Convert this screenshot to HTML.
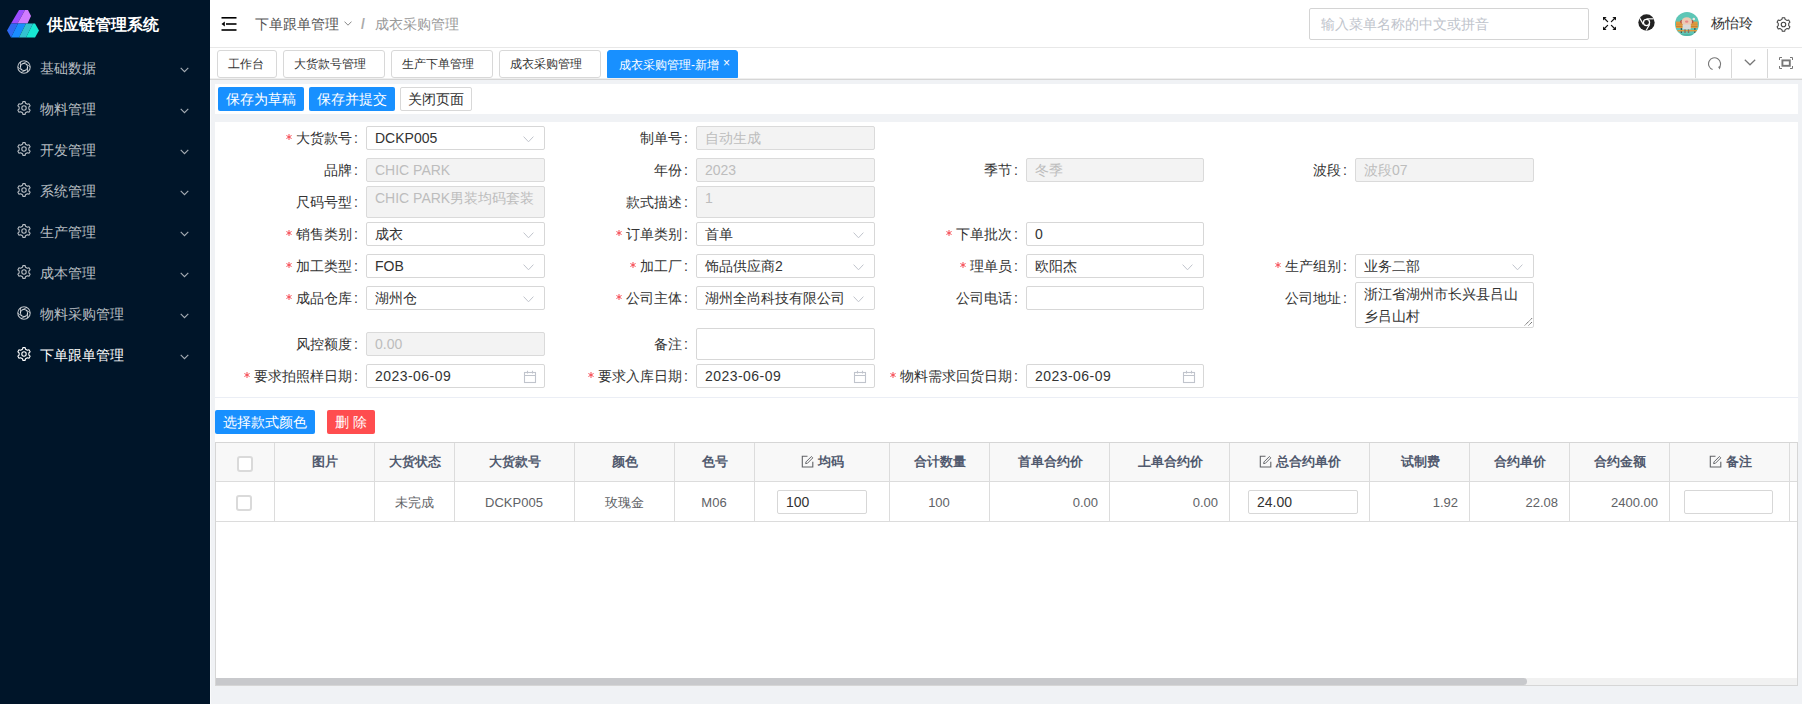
<!DOCTYPE html>
<html><head><meta charset="utf-8">
<style>
*{box-sizing:border-box;margin:0;padding:0}
html,body{width:1802px;height:704px;overflow:hidden}
body{position:relative;background:#f0f2f5;font-family:"Liberation Sans",sans-serif;font-size:14px;color:#606266}
.a{position:absolute}
svg{display:block}
#side{left:0;top:0;width:210px;height:704px;background:#001529}
.logo-t{left:47px;top:14.5px;font-size:16px;font-weight:bold;color:#fff;line-height:20px;white-space:nowrap}
.mi{left:0;width:210px;height:0;color:rgba(255,255,255,.72)}
.mi.on{color:#fff}
.mi .ic{position:absolute;left:17px;top:-8px}
.mi .tx{position:absolute;left:40px;top:-10px;font-size:14px;line-height:20px;white-space:nowrap}
.mi .cv{position:absolute;left:180px;top:-1px;color:rgba(255,255,255,.65)}
#hdr{left:210px;top:0;width:1592px;height:48px;background:#fff;border-bottom:1px solid #e8e8e8}
#tabbar{left:210px;top:48px;width:1592px;height:32px;background:#fff;border-bottom:1px solid #d6d6d6}
.tab{top:50px;height:28px;border:1px solid #d8d8d8;border-radius:3px;font-size:12px;color:#333;line-height:26px;padding-left:10px;white-space:nowrap;background:#fff}
.tab.on{background:#1890ff;border-color:#1890ff;color:#fff;border-radius:3px 3px 0 0;line-height:28px}
.card{background:#fff}
.btn{height:24px;border-radius:2px;font-size:14px;line-height:24px;text-align:center;white-space:nowrap}
.bp{background:#1890ff;color:#fff}
.br{background:#ff4d4f;color:#fff}
.bd{background:#fff;border:1px solid #d8d8d8;color:#333;line-height:22px}
.lb{font-size:14px;color:#333;text-align:right;white-space:nowrap;line-height:20px}
.lb i{display:inline-block;width:6px;height:6px;margin-right:4.5px;vertical-align:3px}
.in{height:24px;width:179px;border:1px solid #d7d7d7;border-radius:2px;background:#fff;font-size:14px;color:#333;line-height:22px;padding-left:8px;white-space:nowrap;overflow:hidden}
.in.dis{background:#f3f3f3;border-color:#dadada;color:#bdbdbd}
.sel svg{position:absolute;right:10px;top:8.5px;color:#c0c4cc}
.cal svg{position:absolute;right:7px;top:5px;color:#c0c4cc}
th,td{border-right:1px solid #e4e7ed;border-bottom:1px solid #e4e7ed}
</style></head><body>
<div id="side" class="a">
  <svg class="a" style="left:0;top:0" width="45" height="45" viewBox="0 0 45 45">
    <polygon points="11,23.5 19,10 25,10 17.5,23.5" fill="#9b4dff"/>
    <polygon points="17.5,23.5 25,10 28,10 31,16 27.5,23.5" fill="#d27cff"/>
    <polygon points="7,30.5 11,23.5 18,23.5 11,37.5" fill="#2f6af2"/>
    <polygon points="11,37.5 18,23.5 26,23.5 19,37.5" fill="#1a8dff"/>
    <polygon points="19,37.5 26,23.5 33,23.5 26,37.5" fill="#33c2cf"/>
    <polygon points="26,37.5 33,23.5 35,23.5 39,30.5 35,37.5" fill="#17e8d3"/>
  </svg>
  <div class="a logo-t">供应链管理系统</div>
  <div class="a mi" style="top:67.5px"><div class="ic"><svg width="14" height="14" viewBox="0 0 14 14"><circle cx="7" cy="7" r="6.2" fill="none" stroke="currentColor" stroke-width="1.1"/><circle cx="7" cy="7" r="3.6" fill="none" stroke="currentColor" stroke-width="1"/><line x1="10.60" y1="7.00" x2="10.35" y2="12.22" stroke="currentColor" stroke-width="0.9"/><line x1="8.80" y1="10.12" x2="4.16" y2="12.51" stroke="currentColor" stroke-width="0.9"/><line x1="5.20" y1="10.12" x2="0.81" y2="7.29" stroke="currentColor" stroke-width="0.9"/><line x1="3.40" y1="7.00" x2="3.65" y2="1.78" stroke="currentColor" stroke-width="0.9"/><line x1="5.20" y1="3.88" x2="9.84" y2="1.49" stroke="currentColor" stroke-width="0.9"/><line x1="8.80" y1="3.88" x2="13.19" y2="6.71" stroke="currentColor" stroke-width="0.9"/></svg></div><div class="tx">基础数据</div><div class="cv"><svg width="9" height="6" viewBox="0 0 9 6"><polyline points="0.7,0.8 4.5,4.6 8.3,0.8" fill="none" stroke="currentColor" stroke-width="1.1"/></svg></div></div>
  <div class="a mi" style="top:108.5px"><div class="ic"><svg width="14" height="14" viewBox="0 0 14 14"><path d="M8.50,11.77 L8.14,13.40 L5.86,13.40 L5.50,11.77 L3.62,10.68 L2.03,11.19 L0.89,9.21 L2.12,8.09 L2.12,5.91 L0.89,4.79 L2.03,2.81 L3.62,3.32 L5.50,2.23 L5.86,0.60 L8.14,0.60 L8.50,2.23 L10.38,3.32 L11.97,2.81 L13.11,4.79 L11.88,5.91 L11.88,8.09 L13.11,9.21 L11.97,11.19 L10.38,10.68Z" fill="none" stroke="currentColor" stroke-width="1.1" stroke-linejoin="round"/><circle cx="7" cy="7" r="2.2" fill="none" stroke="currentColor" stroke-width="1.1"/></svg></div><div class="tx">物料管理</div><div class="cv"><svg width="9" height="6" viewBox="0 0 9 6"><polyline points="0.7,0.8 4.5,4.6 8.3,0.8" fill="none" stroke="currentColor" stroke-width="1.1"/></svg></div></div>
  <div class="a mi" style="top:149.5px"><div class="ic"><svg width="14" height="14" viewBox="0 0 14 14"><path d="M8.50,11.77 L8.14,13.40 L5.86,13.40 L5.50,11.77 L3.62,10.68 L2.03,11.19 L0.89,9.21 L2.12,8.09 L2.12,5.91 L0.89,4.79 L2.03,2.81 L3.62,3.32 L5.50,2.23 L5.86,0.60 L8.14,0.60 L8.50,2.23 L10.38,3.32 L11.97,2.81 L13.11,4.79 L11.88,5.91 L11.88,8.09 L13.11,9.21 L11.97,11.19 L10.38,10.68Z" fill="none" stroke="currentColor" stroke-width="1.1" stroke-linejoin="round"/><circle cx="7" cy="7" r="2.2" fill="none" stroke="currentColor" stroke-width="1.1"/></svg></div><div class="tx">开发管理</div><div class="cv"><svg width="9" height="6" viewBox="0 0 9 6"><polyline points="0.7,0.8 4.5,4.6 8.3,0.8" fill="none" stroke="currentColor" stroke-width="1.1"/></svg></div></div>
  <div class="a mi" style="top:190.5px"><div class="ic"><svg width="14" height="14" viewBox="0 0 14 14"><path d="M8.50,11.77 L8.14,13.40 L5.86,13.40 L5.50,11.77 L3.62,10.68 L2.03,11.19 L0.89,9.21 L2.12,8.09 L2.12,5.91 L0.89,4.79 L2.03,2.81 L3.62,3.32 L5.50,2.23 L5.86,0.60 L8.14,0.60 L8.50,2.23 L10.38,3.32 L11.97,2.81 L13.11,4.79 L11.88,5.91 L11.88,8.09 L13.11,9.21 L11.97,11.19 L10.38,10.68Z" fill="none" stroke="currentColor" stroke-width="1.1" stroke-linejoin="round"/><circle cx="7" cy="7" r="2.2" fill="none" stroke="currentColor" stroke-width="1.1"/></svg></div><div class="tx">系统管理</div><div class="cv"><svg width="9" height="6" viewBox="0 0 9 6"><polyline points="0.7,0.8 4.5,4.6 8.3,0.8" fill="none" stroke="currentColor" stroke-width="1.1"/></svg></div></div>
  <div class="a mi" style="top:231.5px"><div class="ic"><svg width="14" height="14" viewBox="0 0 14 14"><path d="M8.50,11.77 L8.14,13.40 L5.86,13.40 L5.50,11.77 L3.62,10.68 L2.03,11.19 L0.89,9.21 L2.12,8.09 L2.12,5.91 L0.89,4.79 L2.03,2.81 L3.62,3.32 L5.50,2.23 L5.86,0.60 L8.14,0.60 L8.50,2.23 L10.38,3.32 L11.97,2.81 L13.11,4.79 L11.88,5.91 L11.88,8.09 L13.11,9.21 L11.97,11.19 L10.38,10.68Z" fill="none" stroke="currentColor" stroke-width="1.1" stroke-linejoin="round"/><circle cx="7" cy="7" r="2.2" fill="none" stroke="currentColor" stroke-width="1.1"/></svg></div><div class="tx">生产管理</div><div class="cv"><svg width="9" height="6" viewBox="0 0 9 6"><polyline points="0.7,0.8 4.5,4.6 8.3,0.8" fill="none" stroke="currentColor" stroke-width="1.1"/></svg></div></div>
  <div class="a mi" style="top:272.5px"><div class="ic"><svg width="14" height="14" viewBox="0 0 14 14"><path d="M8.50,11.77 L8.14,13.40 L5.86,13.40 L5.50,11.77 L3.62,10.68 L2.03,11.19 L0.89,9.21 L2.12,8.09 L2.12,5.91 L0.89,4.79 L2.03,2.81 L3.62,3.32 L5.50,2.23 L5.86,0.60 L8.14,0.60 L8.50,2.23 L10.38,3.32 L11.97,2.81 L13.11,4.79 L11.88,5.91 L11.88,8.09 L13.11,9.21 L11.97,11.19 L10.38,10.68Z" fill="none" stroke="currentColor" stroke-width="1.1" stroke-linejoin="round"/><circle cx="7" cy="7" r="2.2" fill="none" stroke="currentColor" stroke-width="1.1"/></svg></div><div class="tx">成本管理</div><div class="cv"><svg width="9" height="6" viewBox="0 0 9 6"><polyline points="0.7,0.8 4.5,4.6 8.3,0.8" fill="none" stroke="currentColor" stroke-width="1.1"/></svg></div></div>
  <div class="a mi" style="top:313.5px"><div class="ic"><svg width="14" height="14" viewBox="0 0 14 14"><circle cx="7" cy="7" r="6.2" fill="none" stroke="currentColor" stroke-width="1.1"/><circle cx="7" cy="7" r="3.6" fill="none" stroke="currentColor" stroke-width="1"/><line x1="10.60" y1="7.00" x2="10.35" y2="12.22" stroke="currentColor" stroke-width="0.9"/><line x1="8.80" y1="10.12" x2="4.16" y2="12.51" stroke="currentColor" stroke-width="0.9"/><line x1="5.20" y1="10.12" x2="0.81" y2="7.29" stroke="currentColor" stroke-width="0.9"/><line x1="3.40" y1="7.00" x2="3.65" y2="1.78" stroke="currentColor" stroke-width="0.9"/><line x1="5.20" y1="3.88" x2="9.84" y2="1.49" stroke="currentColor" stroke-width="0.9"/><line x1="8.80" y1="3.88" x2="13.19" y2="6.71" stroke="currentColor" stroke-width="0.9"/></svg></div><div class="tx">物料采购管理</div><div class="cv"><svg width="9" height="6" viewBox="0 0 9 6"><polyline points="0.7,0.8 4.5,4.6 8.3,0.8" fill="none" stroke="currentColor" stroke-width="1.1"/></svg></div></div>
  <div class="a mi on" style="top:354.5px"><div class="ic"><svg width="14" height="14" viewBox="0 0 14 14"><path d="M8.50,11.77 L8.14,13.40 L5.86,13.40 L5.50,11.77 L3.62,10.68 L2.03,11.19 L0.89,9.21 L2.12,8.09 L2.12,5.91 L0.89,4.79 L2.03,2.81 L3.62,3.32 L5.50,2.23 L5.86,0.60 L8.14,0.60 L8.50,2.23 L10.38,3.32 L11.97,2.81 L13.11,4.79 L11.88,5.91 L11.88,8.09 L13.11,9.21 L11.97,11.19 L10.38,10.68Z" fill="none" stroke="currentColor" stroke-width="1.1" stroke-linejoin="round"/><circle cx="7" cy="7" r="2.2" fill="none" stroke="currentColor" stroke-width="1.1"/></svg></div><div class="tx">下单跟单管理</div><div class="cv"><svg width="9" height="6" viewBox="0 0 9 6"><polyline points="0.7,0.8 4.5,4.6 8.3,0.8" fill="none" stroke="currentColor" stroke-width="1.1"/></svg></div></div>
</div>
<div id="hdr" class="a"></div>
<div class="a" style="left:221px;top:17px"><svg width="16" height="14" viewBox="0 0 16 14"><rect x="0.5" y="0" width="15" height="1.6" fill="#000"/><rect x="5" y="6.2" width="10.5" height="1.6" fill="#000"/><rect x="0.5" y="12.2" width="15" height="1.6" fill="#000"/><polygon points="0.5,7 3.8,4.6 3.8,9.4" fill="#000"/></svg></div>
<div class="a" style="left:255px;top:14px;line-height:20px;color:#555;white-space:nowrap">下单跟单管理</div>
<div class="a" style="left:344px;top:21px"><svg width="8" height="5" viewBox="0 0 8 5"><polyline points="0.5,0.6 4,4.2 7.5,0.6" fill="none" stroke="#888" stroke-width="1"/></svg></div>
<div class="a" style="left:361px;top:14px;line-height:20px;color:#aaa;font-weight:bold">/</div>
<div class="a" style="left:375px;top:14px;line-height:20px;color:#9a9a9a;white-space:nowrap">成衣采购管理</div>
<div class="a" style="left:1309px;top:8px;width:280px;height:32px;border:1px solid #d4d4d4;border-radius:2px;background:#fff"></div>
<div class="a" style="left:1321px;top:14px;line-height:20px;color:#c0c4cc;white-space:nowrap">输入菜单名称的中文或拼音</div>
<div class="a" style="left:1603px;top:16.8px"><svg width="13" height="13" viewBox="0 0 13 13" fill="#111" stroke="#111" stroke-width="1.25" stroke-linecap="round"><polygon points="0,0 3.6,0 0,3.6" stroke="none"/><line x1="1.2" y1="1.2" x2="4.6" y2="4.6"/><polygon points="13,0 9.4,0 13,3.6" stroke="none"/><line x1="11.8" y1="1.2" x2="8.4" y2="4.6"/><polygon points="0,13 3.6,13 0,9.4" stroke="none"/><line x1="1.2" y1="11.8" x2="4.6" y2="8.4"/><polygon points="13,13 9.4,13 13,9.4" stroke="none"/><line x1="11.8" y1="11.8" x2="8.4" y2="8.4"/></svg></div>
<div class="a" style="left:1638px;top:14px"><svg width="17" height="17" viewBox="0 0 24 24"><circle cx="12" cy="12" r="11.5" fill="#222"/><circle cx="12" cy="12" r="5.2" fill="#fff"/><circle cx="12" cy="12" r="3.4" fill="#222"/><path d="M12,6.8 L22.2,6.8" stroke="#fff" stroke-width="1.6"/><path d="M7.5,14.6 L2.4,5.8" stroke="#fff" stroke-width="1.6"/><path d="M16.5,14.6 L11.4,23.4" stroke="#fff" stroke-width="1.6"/></svg></div>
<div class="a" style="left:1675px;top:12px"><div style="width:24px;height:24px;border-radius:50%;overflow:hidden"><svg width="24" height="24" viewBox="0 0 24 24"><g><rect width="24" height="24" fill="#5ec6b6"/><rect x="1" y="9.6" width="21.6" height="6.4" fill="#e29a3e"/><rect x="1" y="11.8" width="21.6" height="0.7" fill="#c98a3a"/><rect x="1" y="14.2" width="21.6" height="0.7" fill="#b97a30"/><rect x="5.8" y="16" width="1" height="5" fill="#3b3b3b"/><rect x="19.4" y="16" width="1" height="5" fill="#3b3b3b"/><rect x="2.5" y="18" width="19.5" height="1.4" fill="#e29a3e"/><ellipse cx="6.6" cy="9.8" rx="1.5" ry="1.7" fill="#b5523f"/><ellipse cx="17" cy="9.8" rx="1.5" ry="1.7" fill="#b5523f"/><ellipse cx="11.8" cy="9.8" rx="5.2" ry="4.6" fill="#ecc9b2"/><ellipse cx="11.7" cy="9.6" rx="1.7" ry="1.2" fill="#e7868a"/><rect x="7.6" y="12.6" width="8.2" height="5" rx="0.8" fill="#d9d9d9"/><rect x="9.3" y="17.4" width="1.4" height="3.6" fill="#8f6f5e"/><rect x="12.8" y="17.4" width="1.4" height="3.6" fill="#8f6f5e"/><circle cx="18.8" cy="7" r="1.3" fill="#f1e6e2"/><rect x="0" y="22" width="24" height="2" fill="#4fb5a5"/></g></svg></div></div>
<div class="a" style="left:1711px;top:13px;line-height:20px;color:#333;white-space:nowrap">杨怡玲</div>
<div class="a" style="left:1775.5px;top:16.5px"><svg width="15" height="15" viewBox="0 0 14 14"><path d="M8.50,11.77 L8.12,13.30 L5.88,13.30 L5.50,11.77 L3.62,10.68 L2.10,11.12 L0.98,9.18 L2.12,8.09 L2.12,5.91 L0.98,4.82 L2.10,2.88 L3.62,3.32 L5.50,2.23 L5.88,0.70 L8.12,0.70 L8.50,2.23 L10.38,3.32 L11.90,2.88 L13.02,4.82 L11.88,5.91 L11.88,8.09 L13.02,9.18 L11.90,11.12 L10.38,10.68Z" fill="none" stroke="#444" stroke-width="1" stroke-linejoin="round"/><circle cx="7" cy="7" r="2.1" fill="none" stroke="#444" stroke-width="1.05"/></svg></div>
<div id="tabbar" class="a"></div>
<div class="a tab" style="left:217px;width:60px">工作台</div>
<div class="a tab" style="left:283px;width:102px">大货款号管理</div>
<div class="a tab" style="left:391px;width:102px">生产下单管理</div>
<div class="a tab" style="left:499px;width:102px">成衣采购管理</div>
<div class="a tab on" style="left:607px;width:131px;padding-left:11px">成衣采购管理-新增<span style="position:absolute;left:115px;top:-2px;font-size:12px">×</span></div>
<div class="a" style="left:1695px;top:49px;width:1px;height:29px;background:#d8d8d8"></div>
<div class="a" style="left:1731px;top:49px;width:1px;height:29px;background:#d8d8d8"></div>
<div class="a" style="left:1767px;top:49px;width:1px;height:29px;background:#d8d8d8"></div>
<div class="a" style="left:1707.5px;top:56.5px"><svg width="14" height="14" viewBox="0 0 14 14"><path d="M11.2,10.6 A6,6 0 1 0 4.6,12.5" fill="none" stroke="#777" stroke-width="1.1"/><polygon points="10,9.8 12.8,9.6 11.6,12.4" fill="#777"/></svg></div>
<div class="a" style="left:1744px;top:59px"><svg width="12" height="7" viewBox="0 0 12 7"><polyline points="0.8,0.8 6,5.8 11.2,0.8" fill="none" stroke="#777" stroke-width="1.2"/></svg></div>
<div class="a" style="left:1779px;top:57px"><svg width="14" height="12" viewBox="0 0 14 12" fill="none" stroke="#777" stroke-width="1"><path d="M0.5,3 V0.5 H3 M11,0.5 H13.5 V3 M13.5,9 V11.5 H11 M3,11.5 H0.5 V9"/><rect x="3.4" y="3.4" width="7.4" height="5.4" stroke-width="1.9"/></svg></div>
<div class="a" style="left:210px;top:78px;width:1592px;height:1px;background:#efefef"></div>
<div class="a card" style="left:215px;top:84px;width:1583px;height:30px"></div>
<div class="a btn bp" style="left:218px;top:87px;width:86px">保存为草稿</div>
<div class="a btn bp" style="left:309px;top:87px;width:86px">保存并提交</div>
<div class="a btn bd" style="left:400px;top:87px;width:72px">关闭页面</div>
<div class="a" style="left:210px;top:80px;width:1px;height:624px;background:#fafbfc"></div>
<div class="a card" style="left:215px;top:122px;width:1583px;height:564px"></div>
<div class="a lb" style="right:1444px;top:128px"><i><svg width="6" height="6" viewBox="0 0 6 6" stroke="#f5474f" stroke-width="0.95"><line x1="3" y1="0" x2="3" y2="6"/><line x1="0.4" y1="1.5" x2="5.6" y2="4.5"/><line x1="0.4" y1="4.5" x2="5.6" y2="1.5"/></svg></i>大货款号<span style="margin-left:2px">:</span></div>
<div class="a in sel" style="left:366px;top:126px;width:179px">DCKP005<svg width="11" height="7" viewBox="0 0 11 7"><polyline points="0.6,0.6 5.5,5.8 10.4,0.6" fill="none" stroke="#c0c4cc" stroke-width="1"/></svg></div>
<div class="a lb" style="right:1444px;top:160px">品牌<span style="margin-left:2px">:</span></div>
<div class="a in dis" style="left:366px;top:158px;width:179px">CHIC PARK</div>
<div class="a lb" style="right:1444px;top:192px">尺码号型<span style="margin-left:2px">:</span></div>
<div class="a in dis" style="left:366px;top:186px;height:32px;line-height:20px;padding-top:1px">CHIC PARK男装均码套装</div>
<div class="a lb" style="right:1444px;top:224px"><i><svg width="6" height="6" viewBox="0 0 6 6" stroke="#f5474f" stroke-width="0.95"><line x1="3" y1="0" x2="3" y2="6"/><line x1="0.4" y1="1.5" x2="5.6" y2="4.5"/><line x1="0.4" y1="4.5" x2="5.6" y2="1.5"/></svg></i>销售类别<span style="margin-left:2px">:</span></div>
<div class="a in sel" style="left:366px;top:222px;width:179px">成衣<svg width="11" height="7" viewBox="0 0 11 7"><polyline points="0.6,0.6 5.5,5.8 10.4,0.6" fill="none" stroke="#c0c4cc" stroke-width="1"/></svg></div>
<div class="a lb" style="right:1444px;top:256px"><i><svg width="6" height="6" viewBox="0 0 6 6" stroke="#f5474f" stroke-width="0.95"><line x1="3" y1="0" x2="3" y2="6"/><line x1="0.4" y1="1.5" x2="5.6" y2="4.5"/><line x1="0.4" y1="4.5" x2="5.6" y2="1.5"/></svg></i>加工类型<span style="margin-left:2px">:</span></div>
<div class="a in sel" style="left:366px;top:254px;width:179px">FOB<svg width="11" height="7" viewBox="0 0 11 7"><polyline points="0.6,0.6 5.5,5.8 10.4,0.6" fill="none" stroke="#c0c4cc" stroke-width="1"/></svg></div>
<div class="a lb" style="right:1444px;top:288px"><i><svg width="6" height="6" viewBox="0 0 6 6" stroke="#f5474f" stroke-width="0.95"><line x1="3" y1="0" x2="3" y2="6"/><line x1="0.4" y1="1.5" x2="5.6" y2="4.5"/><line x1="0.4" y1="4.5" x2="5.6" y2="1.5"/></svg></i>成品仓库<span style="margin-left:2px">:</span></div>
<div class="a in sel" style="left:366px;top:286px;width:179px">湖州仓<svg width="11" height="7" viewBox="0 0 11 7"><polyline points="0.6,0.6 5.5,5.8 10.4,0.6" fill="none" stroke="#c0c4cc" stroke-width="1"/></svg></div>
<div class="a lb" style="right:1444px;top:334px">风控额度<span style="margin-left:2px">:</span></div>
<div class="a in dis" style="left:366px;top:332px;width:179px">0.00</div>
<div class="a lb" style="right:1444px;top:366px"><i><svg width="6" height="6" viewBox="0 0 6 6" stroke="#f5474f" stroke-width="0.95"><line x1="3" y1="0" x2="3" y2="6"/><line x1="0.4" y1="1.5" x2="5.6" y2="4.5"/><line x1="0.4" y1="4.5" x2="5.6" y2="1.5"/></svg></i>要求拍照样日期<span style="margin-left:2px">:</span></div>
<div class="a in cal" style="left:366px;top:364px;width:179px;letter-spacing:0.45px">2023-06-09<svg width="14" height="14" viewBox="0 0 14 14" fill="none" stroke="#c0c4cc" stroke-width="1.1"><rect x="1.5" y="2.5" width="11" height="10"/><line x1="1.5" y1="5.5" x2="12.5" y2="5.5"/><line x1="4.5" y1="0.8" x2="4.5" y2="3.5"/><line x1="9.5" y1="0.8" x2="9.5" y2="3.5"/></svg></div>
<div class="a lb" style="right:1114px;top:128px">制单号<span style="margin-left:2px">:</span></div>
<div class="a in dis" style="left:696px;top:126px;width:179px">自动生成</div>
<div class="a lb" style="right:1114px;top:160px">年份<span style="margin-left:2px">:</span></div>
<div class="a in dis" style="left:696px;top:158px;width:179px">2023</div>
<div class="a lb" style="right:1114px;top:192px">款式描述<span style="margin-left:2px">:</span></div>
<div class="a in dis" style="left:696px;top:186px;height:32px;line-height:20px;padding-top:1px">1</div>
<div class="a lb" style="right:1114px;top:224px"><i><svg width="6" height="6" viewBox="0 0 6 6" stroke="#f5474f" stroke-width="0.95"><line x1="3" y1="0" x2="3" y2="6"/><line x1="0.4" y1="1.5" x2="5.6" y2="4.5"/><line x1="0.4" y1="4.5" x2="5.6" y2="1.5"/></svg></i>订单类别<span style="margin-left:2px">:</span></div>
<div class="a in sel" style="left:696px;top:222px;width:179px">首单<svg width="11" height="7" viewBox="0 0 11 7"><polyline points="0.6,0.6 5.5,5.8 10.4,0.6" fill="none" stroke="#c0c4cc" stroke-width="1"/></svg></div>
<div class="a lb" style="right:1114px;top:256px"><i><svg width="6" height="6" viewBox="0 0 6 6" stroke="#f5474f" stroke-width="0.95"><line x1="3" y1="0" x2="3" y2="6"/><line x1="0.4" y1="1.5" x2="5.6" y2="4.5"/><line x1="0.4" y1="4.5" x2="5.6" y2="1.5"/></svg></i>加工厂<span style="margin-left:2px">:</span></div>
<div class="a in sel" style="left:696px;top:254px;width:179px">饰品供应商2<svg width="11" height="7" viewBox="0 0 11 7"><polyline points="0.6,0.6 5.5,5.8 10.4,0.6" fill="none" stroke="#c0c4cc" stroke-width="1"/></svg></div>
<div class="a lb" style="right:1114px;top:288px"><i><svg width="6" height="6" viewBox="0 0 6 6" stroke="#f5474f" stroke-width="0.95"><line x1="3" y1="0" x2="3" y2="6"/><line x1="0.4" y1="1.5" x2="5.6" y2="4.5"/><line x1="0.4" y1="4.5" x2="5.6" y2="1.5"/></svg></i>公司主体<span style="margin-left:2px">:</span></div>
<div class="a in sel" style="left:696px;top:286px;width:179px">湖州全尚科技有限公司<svg width="11" height="7" viewBox="0 0 11 7"><polyline points="0.6,0.6 5.5,5.8 10.4,0.6" fill="none" stroke="#c0c4cc" stroke-width="1"/></svg></div>
<div class="a lb" style="right:1114px;top:334px">备注<span style="margin-left:2px">:</span></div>
<div class="a in" style="left:696px;top:328px;height:32px"></div>
<div class="a lb" style="right:1114px;top:366px"><i><svg width="6" height="6" viewBox="0 0 6 6" stroke="#f5474f" stroke-width="0.95"><line x1="3" y1="0" x2="3" y2="6"/><line x1="0.4" y1="1.5" x2="5.6" y2="4.5"/><line x1="0.4" y1="4.5" x2="5.6" y2="1.5"/></svg></i>要求入库日期<span style="margin-left:2px">:</span></div>
<div class="a in cal" style="left:696px;top:364px;width:179px;letter-spacing:0.45px">2023-06-09<svg width="14" height="14" viewBox="0 0 14 14" fill="none" stroke="#c0c4cc" stroke-width="1.1"><rect x="1.5" y="2.5" width="11" height="10"/><line x1="1.5" y1="5.5" x2="12.5" y2="5.5"/><line x1="4.5" y1="0.8" x2="4.5" y2="3.5"/><line x1="9.5" y1="0.8" x2="9.5" y2="3.5"/></svg></div>
<div class="a lb" style="right:784px;top:160px">季节<span style="margin-left:2px">:</span></div>
<div class="a in dis" style="left:1026px;top:158px;width:178px">冬季</div>
<div class="a lb" style="right:784px;top:224px"><i><svg width="6" height="6" viewBox="0 0 6 6" stroke="#f5474f" stroke-width="0.95"><line x1="3" y1="0" x2="3" y2="6"/><line x1="0.4" y1="1.5" x2="5.6" y2="4.5"/><line x1="0.4" y1="4.5" x2="5.6" y2="1.5"/></svg></i>下单批次<span style="margin-left:2px">:</span></div>
<div class="a in" style="left:1026px;top:222px;width:178px">0</div>
<div class="a lb" style="right:784px;top:256px"><i><svg width="6" height="6" viewBox="0 0 6 6" stroke="#f5474f" stroke-width="0.95"><line x1="3" y1="0" x2="3" y2="6"/><line x1="0.4" y1="1.5" x2="5.6" y2="4.5"/><line x1="0.4" y1="4.5" x2="5.6" y2="1.5"/></svg></i>理单员<span style="margin-left:2px">:</span></div>
<div class="a in sel" style="left:1026px;top:254px;width:178px">欧阳杰<svg width="11" height="7" viewBox="0 0 11 7"><polyline points="0.6,0.6 5.5,5.8 10.4,0.6" fill="none" stroke="#c0c4cc" stroke-width="1"/></svg></div>
<div class="a lb" style="right:784px;top:288px">公司电话<span style="margin-left:2px">:</span></div>
<div class="a in" style="left:1026px;top:286px;width:178px"></div>
<div class="a lb" style="right:784px;top:366px"><i><svg width="6" height="6" viewBox="0 0 6 6" stroke="#f5474f" stroke-width="0.95"><line x1="3" y1="0" x2="3" y2="6"/><line x1="0.4" y1="1.5" x2="5.6" y2="4.5"/><line x1="0.4" y1="4.5" x2="5.6" y2="1.5"/></svg></i>物料需求回货日期<span style="margin-left:2px">:</span></div>
<div class="a in cal" style="left:1026px;top:364px;width:178px;letter-spacing:0.45px">2023-06-09<svg width="14" height="14" viewBox="0 0 14 14" fill="none" stroke="#c0c4cc" stroke-width="1.1"><rect x="1.5" y="2.5" width="11" height="10"/><line x1="1.5" y1="5.5" x2="12.5" y2="5.5"/><line x1="4.5" y1="0.8" x2="4.5" y2="3.5"/><line x1="9.5" y1="0.8" x2="9.5" y2="3.5"/></svg></div>
<div class="a lb" style="right:455px;top:160px">波段<span style="margin-left:2px">:</span></div>
<div class="a in dis" style="left:1355px;top:158px;width:179px">波段07</div>
<div class="a lb" style="right:455px;top:256px"><i><svg width="6" height="6" viewBox="0 0 6 6" stroke="#f5474f" stroke-width="0.95"><line x1="3" y1="0" x2="3" y2="6"/><line x1="0.4" y1="1.5" x2="5.6" y2="4.5"/><line x1="0.4" y1="4.5" x2="5.6" y2="1.5"/></svg></i>生产组别<span style="margin-left:2px">:</span></div>
<div class="a in sel" style="left:1355px;top:254px;width:179px">业务二部<svg width="11" height="7" viewBox="0 0 11 7"><polyline points="0.6,0.6 5.5,5.8 10.4,0.6" fill="none" stroke="#c0c4cc" stroke-width="1"/></svg></div>
<div class="a lb" style="right:455px;top:288px">公司地址<span style="margin-left:2px">:</span></div>
<div class="a in" style="left:1355px;top:282px;height:46px;line-height:21.5px;padding-top:1px;white-space:normal">浙江省湖州市长兴县吕山<br>乡吕山村<svg class="a" style="right:0px;bottom:1px" width="9" height="9" viewBox="0 0 9 9"><line x1="0.8" y1="8.4" x2="8.4" y2="0.8" stroke="#555" stroke-width="1" stroke-dasharray="1.2 0.6"/><line x1="4.6" y1="8.4" x2="8.4" y2="4.6" stroke="#555" stroke-width="1" stroke-dasharray="1.2 0.6"/></svg></div>
<div class="a" style="left:215px;top:397px;width:1583px;height:1px;background:#ebeef5"></div>
<div class="a btn bp" style="left:215px;top:410px;width:100px">选择款式颜色</div>
<div class="a btn br" style="left:327px;top:410px;width:48px">删 除</div>
<div class="a" style="left:215px;top:442px;width:1583px;height:244px;border:1px solid #d6d6d6;background:#fff"></div>
<div class="a" style="left:216px;top:443px;width:1581px;height:39px;background:#f8f8f8;border-bottom:1px solid #dcdcdc"></div>
<div class="a" style="left:216px;top:482px;width:1581px;height:40px;border-bottom:1px solid #dcdcdc"></div>
<div class="a" style="left:274px;top:443px;width:1px;height:78px;background:#dcdcdc"></div>
<div class="a" style="left:237px;top:456px"><div style="width:16px;height:16px;border:2px solid #dadada;border-radius:3px;background:#fff"></div></div>
<div class="a" style="left:236px;top:495px"><div style="width:16px;height:16px;border:2px solid #dadada;border-radius:3px;background:#fff"></div></div>
<div class="a" style="left:374px;top:443px;width:1px;height:78px;background:#dcdcdc"></div>
<div class="a" style="left:275px;top:452px;width:100px;text-align:center;font-size:13px;font-weight:bold;color:#515a6e;line-height:20px;white-space:nowrap">图片</div>
<div class="a" style="left:454px;top:443px;width:1px;height:78px;background:#dcdcdc"></div>
<div class="a" style="left:375px;top:452px;width:80px;text-align:center;font-size:13px;font-weight:bold;color:#515a6e;line-height:20px;white-space:nowrap">大货状态</div>
<div class="a" style="left:374px;top:493px;width:80px;text-align:center;font-size:13px;color:#606266;line-height:20px;white-space:nowrap">未完成</div>
<div class="a" style="left:574px;top:443px;width:1px;height:78px;background:#dcdcdc"></div>
<div class="a" style="left:455px;top:452px;width:120px;text-align:center;font-size:13px;font-weight:bold;color:#515a6e;line-height:20px;white-space:nowrap">大货款号</div>
<div class="a" style="left:454px;top:493px;width:120px;text-align:center;font-size:13px;color:#606266;line-height:20px;white-space:nowrap">DCKP005</div>
<div class="a" style="left:674px;top:443px;width:1px;height:78px;background:#dcdcdc"></div>
<div class="a" style="left:575px;top:452px;width:100px;text-align:center;font-size:13px;font-weight:bold;color:#515a6e;line-height:20px;white-space:nowrap">颜色</div>
<div class="a" style="left:574px;top:493px;width:100px;text-align:center;font-size:13px;color:#606266;line-height:20px;white-space:nowrap">玫瑰金</div>
<div class="a" style="left:754px;top:443px;width:1px;height:78px;background:#dcdcdc"></div>
<div class="a" style="left:675px;top:452px;width:80px;text-align:center;font-size:13px;font-weight:bold;color:#515a6e;line-height:20px;white-space:nowrap">色号</div>
<div class="a" style="left:674px;top:493px;width:80px;text-align:center;font-size:13px;color:#606266;line-height:20px;white-space:nowrap">M06</div>
<div class="a" style="left:889px;top:443px;width:1px;height:78px;background:#dcdcdc"></div>
<div class="a" style="left:755px;top:452px;width:135px;text-align:center;font-size:13px;font-weight:bold;color:#515a6e;line-height:20px;white-space:nowrap"><span style="display:inline-block;vertical-align:-2px;margin-right:4px"><svg width="13" height="13" viewBox="0 0 13 13" fill="none" stroke="#606266" stroke-width="1.1"><path d="M6.5,1.3 H1.3 V12 H11.8 V6.8"/><path d="M4.6,8.6 L5,6.9 L10.4,1.5 L11.8,2.9 L6.4,8.3 Z" stroke-width="0.95" stroke-linejoin="round"/></svg></span>均码</div>
<div class="a in" style="left:777px;top:490px;width:90px;height:24px;font-size:14px">100</div>
<div class="a" style="left:989px;top:443px;width:1px;height:78px;background:#dcdcdc"></div>
<div class="a" style="left:890px;top:452px;width:100px;text-align:center;font-size:13px;font-weight:bold;color:#515a6e;line-height:20px;white-space:nowrap">合计数量</div>
<div class="a" style="left:889px;top:493px;width:100px;text-align:center;font-size:13px;color:#606266;line-height:20px;white-space:nowrap">100</div>
<div class="a" style="left:1109px;top:443px;width:1px;height:78px;background:#dcdcdc"></div>
<div class="a" style="left:990px;top:452px;width:120px;text-align:center;font-size:13px;font-weight:bold;color:#515a6e;line-height:20px;white-space:nowrap">首单合约价</div>
<div class="a" style="left:989px;top:493px;width:120px;text-align:right;padding-right:11px;font-size:13px;color:#606266;line-height:20px;white-space:nowrap">0.00</div>
<div class="a" style="left:1229px;top:443px;width:1px;height:78px;background:#dcdcdc"></div>
<div class="a" style="left:1110px;top:452px;width:120px;text-align:center;font-size:13px;font-weight:bold;color:#515a6e;line-height:20px;white-space:nowrap">上单合约价</div>
<div class="a" style="left:1109px;top:493px;width:120px;text-align:right;padding-right:11px;font-size:13px;color:#606266;line-height:20px;white-space:nowrap">0.00</div>
<div class="a" style="left:1369px;top:443px;width:1px;height:78px;background:#dcdcdc"></div>
<div class="a" style="left:1230px;top:452px;width:140px;text-align:center;font-size:13px;font-weight:bold;color:#515a6e;line-height:20px;white-space:nowrap"><span style="display:inline-block;vertical-align:-2px;margin-right:4px"><svg width="13" height="13" viewBox="0 0 13 13" fill="none" stroke="#606266" stroke-width="1.1"><path d="M6.5,1.3 H1.3 V12 H11.8 V6.8"/><path d="M4.6,8.6 L5,6.9 L10.4,1.5 L11.8,2.9 L6.4,8.3 Z" stroke-width="0.95" stroke-linejoin="round"/></svg></span>总合约单价</div>
<div class="a in" style="left:1248px;top:490px;width:110px;height:24px;font-size:14px">24.00</div>
<div class="a" style="left:1469px;top:443px;width:1px;height:78px;background:#dcdcdc"></div>
<div class="a" style="left:1370px;top:452px;width:100px;text-align:center;font-size:13px;font-weight:bold;color:#515a6e;line-height:20px;white-space:nowrap">试制费</div>
<div class="a" style="left:1369px;top:493px;width:100px;text-align:right;padding-right:11px;font-size:13px;color:#606266;line-height:20px;white-space:nowrap">1.92</div>
<div class="a" style="left:1569px;top:443px;width:1px;height:78px;background:#dcdcdc"></div>
<div class="a" style="left:1470px;top:452px;width:100px;text-align:center;font-size:13px;font-weight:bold;color:#515a6e;line-height:20px;white-space:nowrap">合约单价</div>
<div class="a" style="left:1469px;top:493px;width:100px;text-align:right;padding-right:11px;font-size:13px;color:#606266;line-height:20px;white-space:nowrap">22.08</div>
<div class="a" style="left:1669px;top:443px;width:1px;height:78px;background:#dcdcdc"></div>
<div class="a" style="left:1570px;top:452px;width:100px;text-align:center;font-size:13px;font-weight:bold;color:#515a6e;line-height:20px;white-space:nowrap">合约金额</div>
<div class="a" style="left:1569px;top:493px;width:100px;text-align:right;padding-right:11px;font-size:13px;color:#606266;line-height:20px;white-space:nowrap">2400.00</div>
<div class="a" style="left:1789px;top:443px;width:1px;height:78px;background:#dcdcdc"></div>
<div class="a" style="left:1670px;top:452px;width:120px;text-align:center;font-size:13px;font-weight:bold;color:#515a6e;line-height:20px;white-space:nowrap"><span style="display:inline-block;vertical-align:-2px;margin-right:4px"><svg width="13" height="13" viewBox="0 0 13 13" fill="none" stroke="#606266" stroke-width="1.1"><path d="M6.5,1.3 H1.3 V12 H11.8 V6.8"/><path d="M4.6,8.6 L5,6.9 L10.4,1.5 L11.8,2.9 L6.4,8.3 Z" stroke-width="0.95" stroke-linejoin="round"/></svg></span>备注</div>
<div class="a in" style="left:1684px;top:490px;width:89px;height:24px;font-size:14px"></div>
<div class="a" style="left:216px;top:678px;width:1581px;height:7px;background:#f1f1f1"></div>
<div class="a" style="left:216px;top:678px;width:1311px;height:7px;background:#c8c9cc;border-radius:0 4px 4px 0"></div>
</body></html>
